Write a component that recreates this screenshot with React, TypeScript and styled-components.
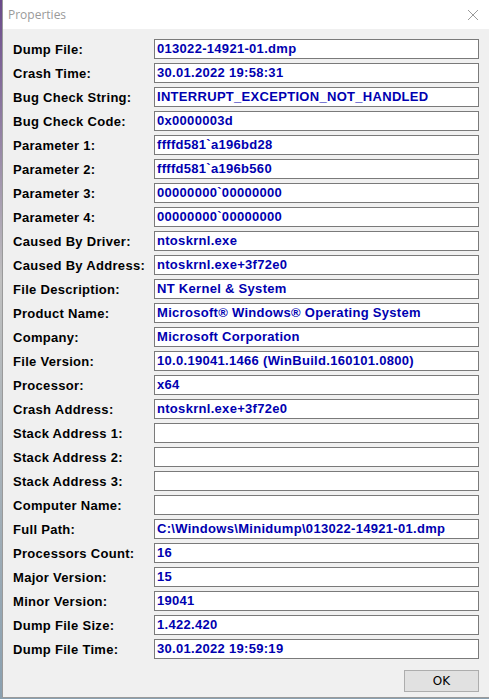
import React from "react";
import styled, { createGlobalStyle } from "styled-components";

const GlobalStyle = createGlobalStyle`
  html, body {
    margin: 0;
    padding: 0;
    background: #8a8a8a;
  }
`;

const Desktop = styled.div`
  width: 489px;
  height: 699px;
  padding-left: 2px;
  box-sizing: border-box;
  background: linear-gradient(180deg, #6a4a8a 0%, #c0c0c0 40%, #8aa0b0 100%);
`;

const Window = styled.div`
  width: 487px;
  height: 698px;
  box-sizing: border-box;
  border-left: 1px solid #9a9a9a;
  border-bottom: 1px solid #9a9a9a;
  background: #f0f0f0;
  display: flex;
  flex-direction: column;
`;

const TitleBar = styled.div`
  height: 29px;
  background: #ffffff;
  display: flex;
  align-items: center;
  justify-content: space-between;
  padding: 0 10px 0 5px;
  font-family: "Open Sans", "Noto Sans", sans-serif;
  font-size: 12px;
  color: #9a9a9a;
`;

const CloseIcon = () => (
  <svg width="12" height="12" viewBox="0 0 12 12">
    <path d="M1 1 L11 11 M11 1 L1 11" stroke="#9a9a9a" strokeWidth="1" fill="none" />
  </svg>
);

const Body = styled.div`
  flex: 1;
  display: flex;
  flex-direction: column;
  padding: 10px 10px 0 10px;
`;

const Rows = styled.div`
  display: flex;
  flex-direction: column;
  gap: 4px;
`;

const Row = styled.div`
  display: flex;
  align-items: center;
  height: 20px;
`;

const Label = styled.div`
  width: 141px;
  font-family: "Liberation Sans", Arial, sans-serif;
  font-weight: bold;
  font-size: 13px;
  letter-spacing: 0.3px;
  color: #000;
  white-space: nowrap;
`;

const Field = styled.div`
  width: 325px;
  height: 20px;
  box-sizing: border-box;
  border: 1px solid #7a7a7a;
  background: #fff;
  padding: 0 2px;
  font-family: "Liberation Sans", Arial, sans-serif;
  font-weight: bold;
  font-size: 13px;
  letter-spacing: 0.3px;
  line-height: 18px;
  color: #0000b0;
  white-space: nowrap;
  overflow: hidden;
`;

const Footer = styled.div`
  display: flex;
  justify-content: flex-end;
  padding-top: 11px;
`;

const OkButton = styled.button`
  width: 75px;
  height: 22px;
  background: #e1e1e1;
  border: 1px solid #adadad;
  font-family: "DejaVu Sans", sans-serif;
  font-size: 12px;
  color: #000;
  padding: 0;
`;

const props: [string, string][] = [
  ["Dump File:", "013022-14921-01.dmp"],
  ["Crash Time:", "30.01.2022 19:58:31"],
  ["Bug Check String:", "INTERRUPT_EXCEPTION_NOT_HANDLED"],
  ["Bug Check Code:", "0x0000003d"],
  ["Parameter 1:", "ffffd581`a196bd28"],
  ["Parameter 2:", "ffffd581`a196b560"],
  ["Parameter 3:", "00000000`00000000"],
  ["Parameter 4:", "00000000`00000000"],
  ["Caused By Driver:", "ntoskrnl.exe"],
  ["Caused By Address:", "ntoskrnl.exe+3f72e0"],
  ["File Description:", "NT Kernel & System"],
  ["Product Name:", "Microsoft® Windows® Operating System"],
  ["Company:", "Microsoft Corporation"],
  ["File Version:", "10.0.19041.1466 (WinBuild.160101.0800)"],
  ["Processor:", "x64"],
  ["Crash Address:", "ntoskrnl.exe+3f72e0"],
  ["Stack Address 1:", ""],
  ["Stack Address 2:", ""],
  ["Stack Address 3:", ""],
  ["Computer Name:", ""],
  ["Full Path:", "C:\\Windows\\Minidump\\013022-14921-01.dmp"],
  ["Processors Count:", "16"],
  ["Major Version:", "15"],
  ["Minor Version:", "19041"],
  ["Dump File Size:", "1.422.420"],
  ["Dump File Time:", "30.01.2022 19:59:19"],
];

export default function App() {
  return (
    <>
      <GlobalStyle />
      <Desktop>
        <Window>
          <TitleBar>
            <span>Properties</span>
            <CloseIcon />
          </TitleBar>
          <Body>
            <Rows>
              {props.map(([label, value]) => (
                <Row key={label}>
                  <Label>{label}</Label>
                  <Field>{value}</Field>
                </Row>
              ))}
            </Rows>
            <Footer>
              <OkButton>OK</OkButton>
            </Footer>
          </Body>
        </Window>
      </Desktop>
    </>
  );
}
